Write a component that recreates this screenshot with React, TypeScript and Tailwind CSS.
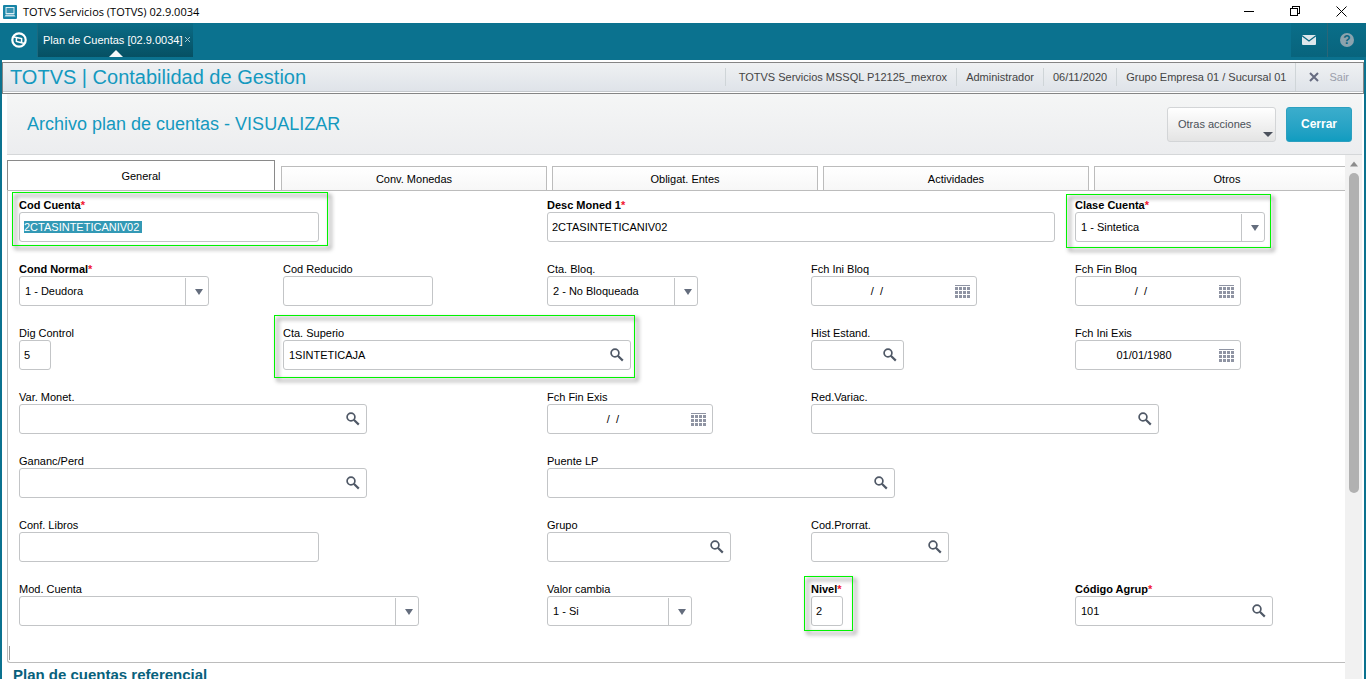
import { useEffect, useRef, type ReactNode } from "react";
import { cx } from "class-variance-authority";

type FieldKind = "text" | "select" | "date" | "lookup";

type FieldData = {
  id: string;
  label: string;
  kind: FieldKind;
  width: string;
  span?: string;
  value?: string;
  required?: boolean;
  selected?: boolean;
  mark?: string;
};

const tabs = ["Conv. Monedas", "Obligat. Entes", "Actividades", "Otros"];

const fields: FieldData[] = [
  { id: "codCuenta", label: "Cod Cuenta", kind: "text", width: "w-[300px]", span: "col-span-2", value: "2CTASINTETICANIV02 ", required: true, selected: true, mark: "-left-[7px] -right-[9px] -top-[6px] -bottom-[4px]" },
  { id: "descMoned", label: "Desc Moned 1", kind: "text", width: "w-[508px]", span: "col-span-2", value: "2CTASINTETICANIV02", required: true },
  { id: "clase", label: "Clase Cuenta", kind: "select", width: "w-[190px]", value: "1 - Sintetica", required: true, mark: "-left-[9px] -right-[6px] -top-[4px] -bottom-[6px]" },

  { id: "condNormal", label: "Cond Normal", kind: "select", width: "w-[190px]", value: "1 - Deudora", required: true },
  { id: "codReducido", label: "Cod Reducido", kind: "text", width: "w-[150px]" },
  { id: "ctaBloq", label: "Cta. Bloq.", kind: "select", width: "w-[151px]", value: "2 - No Bloqueada" },
  { id: "fchIniBloq", label: "Fch Ini Bloq", kind: "date", width: "w-[166px]", value: "/  /  " },
  { id: "fchFinBloq", label: "Fch Fin Bloq", kind: "date", width: "w-[166px]", value: "/  /  " },

  { id: "digControl", label: "Dig Control", kind: "text", width: "w-[32px]", value: "5" },
  { id: "ctaSuperio", label: "Cta. Superio", kind: "lookup", width: "w-[348px]", span: "col-span-2", value: "1SINTETICAJA", mark: "-left-[9px] -right-[4px] -top-[11px] -bottom-[8px]" },
  { id: "histEstand", label: "Hist Estand.", kind: "lookup", width: "w-[93px]" },
  { id: "fchIniExis", label: "Fch Ini Exis", kind: "date", width: "w-[166px]", value: "01/01/1980" },

  { id: "varMonet", label: "Var. Monet.", kind: "lookup", width: "w-[348px]", span: "col-span-2" },
  { id: "fchFinExis", label: "Fch Fin Exis", kind: "date", width: "w-[166px]", value: "/  /  " },
  { id: "redVariac", label: "Red.Variac.", kind: "lookup", width: "w-[348px]", span: "col-span-2" },

  { id: "ganancPerd", label: "Gananc/Perd", kind: "lookup", width: "w-[348px]", span: "col-span-2" },
  { id: "puenteLp", label: "Puente LP", kind: "lookup", width: "w-[348px]", span: "col-span-3" },

  { id: "confLibros", label: "Conf. Libros", kind: "text", width: "w-[300px]", span: "col-span-2" },
  { id: "grupo", label: "Grupo", kind: "lookup", width: "w-[184px]" },
  { id: "codProrrat", label: "Cod.Prorrat.", kind: "lookup", width: "w-[138px]", span: "col-span-2" },

  { id: "modCuenta", label: "Mod. Cuenta", kind: "select", width: "w-[400px]", span: "col-span-2", value: "" },
  { id: "valorCambia", label: "Valor cambia", kind: "select", width: "w-[145px]", value: "1 - Si" },
  { id: "nivel", label: "Nivel", kind: "text", width: "w-[32px]", value: "2", required: true, mark: "-left-[7px] -right-[10px] -top-[6px] -bottom-[5px]" },
  { id: "codAgrup", label: "Código Agrup", kind: "lookup", width: "w-[198px]", value: "101", required: true },
];

const SearchIcon = () => (
  <svg width="14" height="14" viewBox="0 0 14 14" fill="none" stroke="#4f5866">
    <circle cx="5" cy="5" r="3.9" strokeWidth="1.7" />
    <path d="M7.8 7.8L12.8 12.6" strokeWidth="2.2" />
  </svg>
);

const CalendarIcon = () => (
  <svg width="15" height="13" viewBox="0 0 15 13" fill="#8f94a3" shapeRendering="crispEdges">
    <rect width="15" height="1" />
    {[2, 6, 10].map((y) =>
      [0, 4, 8, 12].map((x) => <rect key={`${x}-${y}`} x={x} y={y} width="3" height="3" />)
    )}
  </svg>
);

const Field = ({ field }: { field: FieldData }) => {
  const ref = useRef<HTMLInputElement>(null);

  useEffect(() => {
    if (field.selected) {
      ref.current?.focus();
      ref.current?.select();
    }
  }, [field.selected]);

  return (
    <div className={field.span}>
      <div className={cx("relative max-w-full", field.width)}>
        <label
          htmlFor={field.id}
          className={cx("block h-[14px] whitespace-nowrap leading-[14px]", field.required && "font-bold")}
        >
          {field.label}
          {field.required && <span className="text-[#f0142f]">*</span>}
        </label>
        <div className="relative flex h-[30px] items-center rounded-[3px] border border-[#c3c5c7] bg-white">
          {field.kind === "select" ? (
            <>
              <select
                id={field.id}
                defaultValue={field.value}
                className="h-full w-full appearance-none bg-transparent pl-[5px] pr-6 outline-none"
              >
                <option>{field.value}</option>
              </select>
              <span className="pointer-events-none absolute right-0 bottom-0 top-px flex w-[23px] items-center justify-center border-l border-[#c3c5c7] pl-[3px]">
                <svg width="8" height="6" viewBox="0 0 8 6" fill="#646d7d">
                  <path d="M0 0H8L4 6Z" />
                </svg>
              </span>
            </>
          ) : (
            <input
              ref={ref}
              id={field.id}
              type="text"
              defaultValue={field.value}
              className={cx(
                "h-full min-w-0 flex-1 bg-transparent outline-none selection:bg-[#3399b5] selection:text-white",
                field.kind === "text" ? "px-1" : "pl-[5px]",
                field.kind === "date" && "whitespace-pre text-center"
              )}
            />
          )}
          {field.kind === "lookup" && (
            <button type="button" aria-label={`Buscar ${field.label}`} className="pr-1.5">
              <SearchIcon />
            </button>
          )}
          {field.kind === "date" && (
            <button type="button" aria-label={`Calendario ${field.label}`} className="pl-3 pr-1.5">
              <CalendarIcon />
            </button>
          )}
        </div>
        {field.mark && (
          <span
            className={cx(
              "pointer-events-none absolute border border-[#00f400] drop-shadow-[3px_3px_2px_rgba(0,0,0,0.8)]",
              field.mark
            )}
          />
        )}
      </div>
    </div>
  );
};

const TitleBar = () => (
  <header className="flex h-[23px] shrink-0 items-center bg-white pr-0.5 text-black">
    <svg className="ml-[3px]" width="14" height="14" viewBox="0 0 14 14">
      <rect width="14" height="14" rx="1" fill="#1583a6" />
      <rect x="3" y="2.5" width="8" height="6" fill="#3a93b2" stroke="#dceef4" />
      <path d="M1.5 11.5L2.8 9.5H11.2L12.5 11.5Z" fill="#c4dfe9" />
    </svg>
    <h1 className="ml-1.5 flex-1 font-['Open_Sans',sans-serif] text-[11px] leading-4">
      TOTVS Servicios (TOTVS) 02.9.0034
    </h1>
    <button type="button" aria-label="Minimizar" className="flex w-[46px] justify-center">
      <svg width="11" height="11" shapeRendering="crispEdges">
        <path d="M0 5.5H10" stroke="#000" />
      </svg>
    </button>
    <button type="button" aria-label="Restaurar" className="flex w-[46px] justify-center">
      <svg width="11" height="11" fill="none" stroke="#000" shapeRendering="crispEdges">
        <path d="M.5 2.5H7.5V9.5H.5ZM2.5 2.5V.5H9.5V7.5H7.5" />
      </svg>
    </button>
    <button type="button" aria-label="Cerrar ventana" className="flex w-[46px] justify-center">
      <svg width="11" height="11" stroke="#000">
        <path d="M.5 .5L10.5 10.5M10.5 .5L.5 10.5" />
      </svg>
    </button>
  </header>
);

const ProgramBar = () => (
  <nav className="flex h-[37px] shrink-0 items-start bg-[#0b728f] pb-[3px] text-white">
    <button type="button" aria-label="Inicio" className="flex h-full w-[38px] items-center justify-center border-r border-[#1c6a80]">
      <svg width="16" height="16" viewBox="0 0 16 16" fill="none" stroke="#fff">
        <circle cx="8" cy="8" r="6.7" strokeWidth="2.2" />
        <path d="M2 4.8L5.4 5.4L10.6 6.6V10.8L5.4 9.4V5.4M10.6 10.8L14 11.4" strokeWidth="1.5" />
      </svg>
    </button>
    <div className="relative flex h-full items-center bg-linear-to-b from-[#0b6c87] to-[#065063] pl-[5px] pr-0.5">
      <a href="#plan" className="whitespace-nowrap">
        Plan de Cuentas [02.9.0034]
      </a>
      <button type="button" aria-label="Cerrar pestaña" className="ml-0.5 pb-0.5">
        <svg width="7" height="7" stroke="#a9c9d3">
          <path d="M1 1L6 6M6 1L1 6" />
        </svg>
      </button>
      <svg className="absolute bottom-0 left-1/2 -translate-x-1/2" width="14" height="7" fill="#f5f8f9">
        <path d="M0 7L7 0L14 7Z" />
      </svg>
    </div>
    <div className="flex-1" />
    <button type="button" aria-label="Mensajes" className="flex h-full w-[37px] items-center justify-center border-r border-[#2b6678] bg-linear-to-b from-[#0a6e89] to-[#08647d]">
      <svg width="14" height="10" viewBox="0 0 14 10">
        <rect width="14" height="10" rx="1" fill="#dfe7ec" />
        <path d="M0 .8L7 6L14 .8" fill="none" stroke="#0a6882" strokeWidth="1.3" />
      </svg>
    </button>
    <button type="button" aria-label="Ayuda" className="flex h-full w-[38px] items-center justify-center bg-linear-to-b from-[#0a6e89] to-[#08647d]">
      <span className="flex size-[14px] items-center justify-center rounded-full bg-[#8ba3ae] text-[12px] font-bold leading-[14px] text-[#0a6580]">
        ?
      </span>
    </button>
  </nav>
);

const Info = ({ children }: { children: ReactNode }) => (
  <span className="whitespace-nowrap border-l border-[#cfd5d8] px-[9px] leading-[18px]">{children}</span>
);

const ModuleBar = () => (
  <div className="mt-0.5 flex h-8 shrink-0 flex-col border border-[#858585] bg-white pb-px">
    <div className="flex flex-1 items-center border-b border-[#c5c9cd] bg-linear-to-b from-[#eff1f3] to-[#dfe3e9] text-[#444]">
      <h2 className="ml-[7px] flex-1 whitespace-nowrap text-[20px] leading-6 text-[#1499bf]">
        TOTVS | Contabilidad de Gestion
      </h2>
      <span className="flex border-l border-[#cfd5d8] pl-1">
        <span className="px-[9px] leading-[18px]">TOTVS Servicios MSSQL P12125_mexrox</span>
      </span>
      <Info>Administrador</Info>
      <Info>06/11/2020</Info>
      <Info>Grupo Empresa 01 / Sucursal 01</Info>
      <button type="button" className="flex h-full items-center gap-[10px] border-l border-[#cfd5d8] pl-[13px] pr-[14px] text-[#9a9eab]">
        <svg width="10" height="10" stroke="#666b80" strokeWidth="2">
          <path d="M1 1L9 9M9 1L1 9" />
        </svg>
        Sair
      </button>
    </div>
  </div>
);

const ScrollBar = () => (
  <div className="flex w-[17px] shrink-0 flex-col items-center bg-[#f1f1f1] pt-1.5">
    <svg width="8" height="6" fill="#8c8c8c">
      <path d="M0 5.5L4 .5L8 5.5Z" />
    </svg>
    <div className="mt-1.5 h-[320px] w-[10px] rounded-full bg-[#b1b1b1]" />
  </div>
);

const App = () => {
  return (
    <div className="flex h-screen flex-col overflow-hidden bg-white font-['Liberation_Sans',Arial,sans-serif] text-[11px] leading-[14px] text-black">
      <TitleBar />
      <ProgramBar />
      <div className="flex min-h-0 flex-1 flex-col border-x-2 border-[#0b728f]">
        <ModuleBar />
        <main className="ml-[5px] mr-0.5 flex min-h-0 flex-1 flex-col">
          <div className="flex h-[61px] shrink-0 items-center gap-[10px] border-b border-[#d5d7d9] bg-linear-to-b from-[#f5f6f6] to-[#ecedef] pl-5 pr-[10px]">
            <h3 className="flex-1 text-[18px] leading-6 text-[#1499bf]">Archivo plan de cuentas - VISUALIZAR</h3>
            <button
              type="button"
              className="relative h-[35px] w-[109px] rounded-[3px] border border-[#d3d5d7] bg-linear-to-b from-white to-[#e4e4e4] pl-[10px] text-left text-[#4a5058]"
            >
              Otras acciones
              <svg className="absolute bottom-1 right-0.5" width="10" height="5" fill="#4b515c">
                <path d="M0 0H10L5 5Z" />
              </svg>
            </button>
            <button
              type="button"
              className="h-[35px] w-[66px] rounded-[3px] border border-[#2ca0c0] bg-linear-to-b from-[#3badcc] to-[#109cc0] text-[12px] font-bold text-white"
            >
              Cerrar
            </button>
          </div>
          <div className="flex min-h-0 flex-1">
            <div className="min-w-0 flex-1 overflow-hidden pt-[5px]">
              <div role="tablist" className="flex items-end gap-[5px] overflow-hidden">
                <button
                  type="button"
                  role="tab"
                  aria-selected="true"
                  className="mr-px h-[30px] w-[268px] shrink-0 border border-b-0 border-[#8a8a8a] bg-white"
                >
                  General
                </button>
                {tabs.map((tab) => (
                  <button
                    key={tab}
                    type="button"
                    role="tab"
                    aria-selected="false"
                    className="h-6 w-[266px] shrink-0 border border-b-0 border-[#bcbcbc] bg-linear-to-b from-white to-[#f7f7f7]"
                  >
                    {tab}
                  </button>
                ))}
              </div>
              <section className="rounded-bl-[3px] border border-r-0 border-[#bcbcbc] pt-[7px]">
                <div className="grid grid-cols-5 gap-y-5 pl-[11px] pr-1.5">
                  {fields.map((field) => (
                    <Field key={field.id} field={field} />
                  ))}
                </div>
                <div className="mb-[2px] ml-px mt-5 h-[14px] w-px bg-[#9a9a9a]" />
              </section>
              <h4 className="mt-1 pl-1.5 text-[15px] font-bold leading-4 text-[#08617c]">
                Plan de cuentas referencial
              </h4>
            </div>
            <ScrollBar />
          </div>
        </main>
      </div>
    </div>
  );
};

export default App;
